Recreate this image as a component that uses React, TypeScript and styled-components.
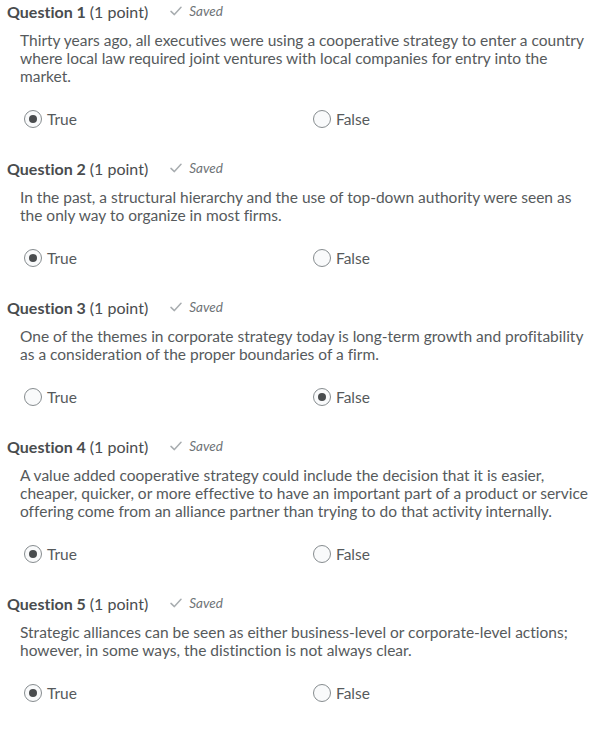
import React from "react"
import styled, { createGlobalStyle } from "styled-components"

const GlobalStyle = createGlobalStyle`
  html, body {
    margin: 0;
    padding: 0;
    background: #ffffff;
  }
  body {
    font-family: Lato, "Open Sans", sans-serif;
    color: #494c4e;
    font-variant-ligatures: none;
  }
`

interface QuestionData {
  text: string
  answer: "True" | "False"
}

const questions: QuestionData[] = [
  {
    text: "Thirty years ago, all executives were using a cooperative strategy to enter a country where local law required joint ventures with local companies for entry into the market.",
    answer: "True",
  },
  {
    text: "In the past, a structural hierarchy and the use of top-down authority were seen as the only way to organize in most firms.",
    answer: "True",
  },
  {
    text: "One of the themes in corporate strategy today is long-term growth and profitability as a consideration of the proper boundaries of a firm.",
    answer: "False",
  },
  {
    text: "A value added cooperative strategy could include the decision that it is easier, cheaper, quicker, or more effective to have an important part of a product or service offering come from an alliance partner than trying to do that activity internally.",
    answer: "True",
  },
  {
    text: "Strategic alliances can be seen as either business-level or corporate-level actions; however, in some ways, the distinction is not always clear.",
    answer: "True",
  },
]

const Page = styled.div`
  padding: 1px 0 0 7px;
  width: 598px;
`

const Question = styled.section`
  margin-bottom: 29px;
`

const Header = styled.div`
  display: flex;
  align-items: center;
  height: 20px;
  color: #494c4e;
  font-size: 16px;
`

const Title = styled.strong`
  font-weight: 700;
`

const Points = styled.span`
  margin-left: 4px;
  font-weight: 400;
`

const SavedBox = styled.span`
  display: flex;
  align-items: center;
  margin-left: 22px;
  color: #6e7376;
  font-size: 13.5px;
  font-style: italic;
  gap: 7px;
`

const Body = styled.p`
  margin: 10px 0 0 13px;
  width: 574px;
  font-size: 15.5px;
  line-height: 18px;
  color: #565a5c;
`

const Options = styled.div`
  display: grid;
  grid-template-columns: 289px 1fr;
  margin: 24px 0 0 17px;
`

const Option = styled.label`
  display: flex;
  align-items: center;
  gap: 5px;
  height: 20px;
  font-size: 15.5px;
  color: #565a5c;
`

const Radio = styled.span<{ $checked: boolean }>`
  box-sizing: border-box;
  width: 18px;
  height: 18px;
  border-radius: 50%;
  border: 1px solid #868c8f;
  background: #f9fafb;
  display: flex;
  align-items: center;
  justify-content: center;
  &::after {
    content: "";
    display: ${({ $checked }) => ($checked ? "block" : "none")};
    width: 8px;
    height: 8px;
    border-radius: 50%;
    background: #494c4e;
  }
`

const Check = () => (
  <svg width="12" height="10" viewBox="0 0 12 10">
    <path
      d="M1 5.4 L4.4 8.6 L11 1.2"
      fill="none"
      stroke="#a8adb0"
      strokeWidth="1.5"
      strokeLinecap="round"
      strokeLinejoin="round"
    />
  </svg>
)

export default function App() {
  return (
    <Page>
      <GlobalStyle />
      {questions.map((q, i) => (
        <Question key={i}>
          <Header>
            <Title>Question {i + 1}</Title>
            <Points>(1 point)</Points>
            <SavedBox>
              <Check />
              Saved
            </SavedBox>
          </Header>
          <Body>{q.text}</Body>
          <Options>
            {(["True", "False"] as const).map((opt) => (
              <Option key={opt}>
                <Radio $checked={q.answer === opt} />
                {opt}
              </Option>
            ))}
          </Options>
        </Question>
      ))}
    </Page>
  )
}
